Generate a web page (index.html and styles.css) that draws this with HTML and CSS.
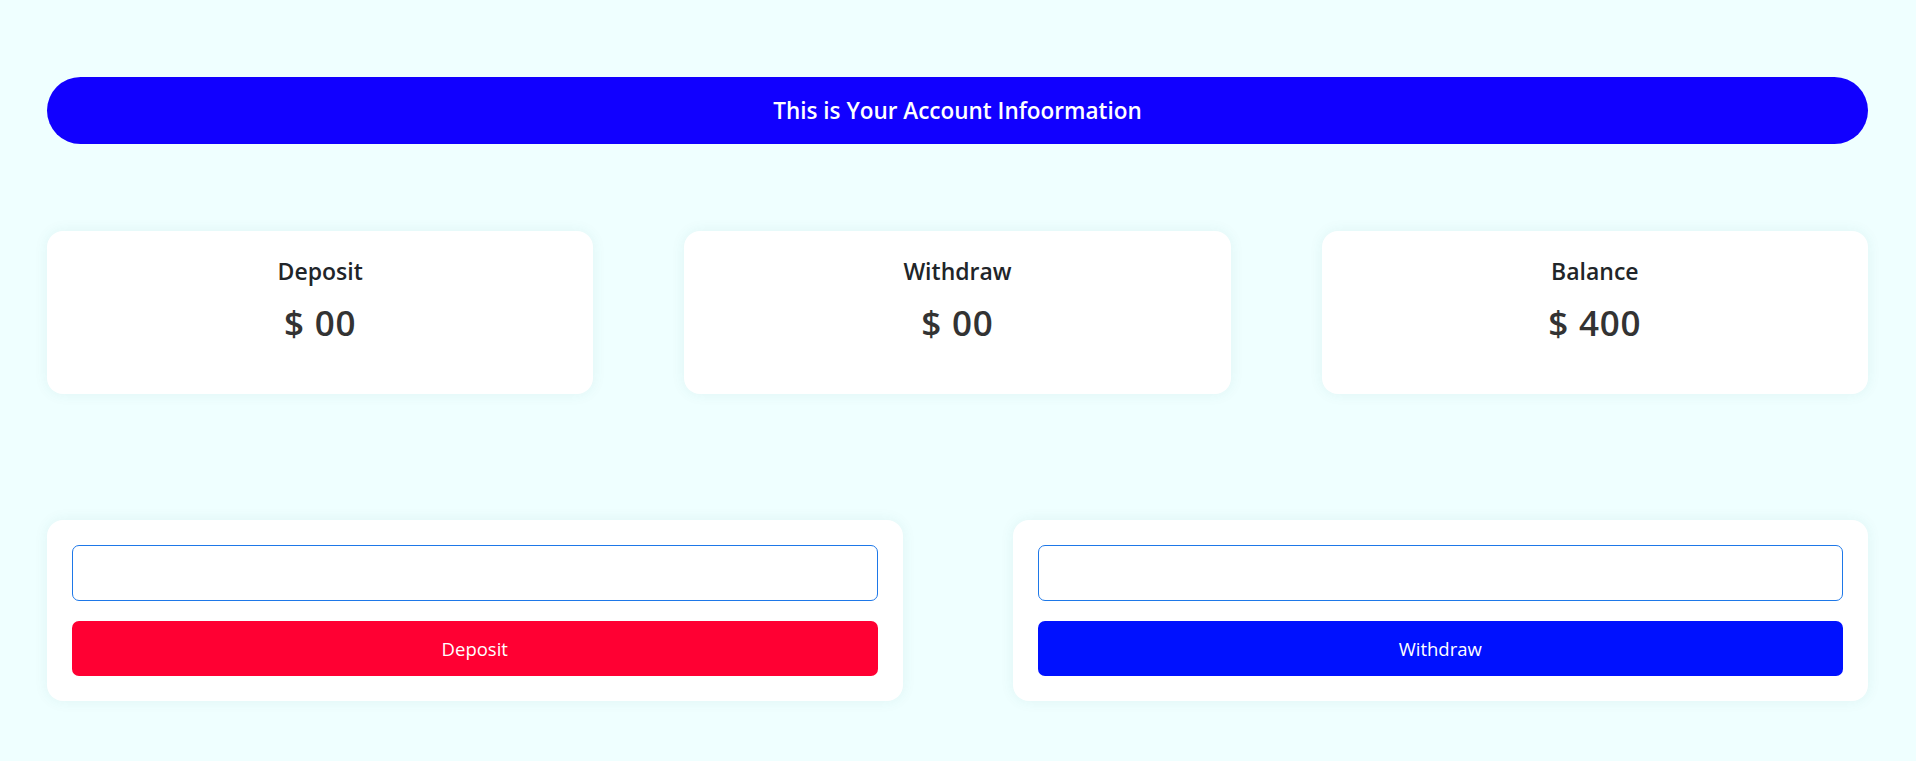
FILE: index.html
```html
<!DOCTYPE html>
<html lang="en">
<head>
<meta charset="utf-8">
<title>Account Information</title>
<link rel="stylesheet" href="styles.css">
</head>
<body>
<main class="page">
  <header class="banner">This is Your Account Infoormation</header>

  <section class="stats">
    <div class="stat-card">
      <h3 class="stat-title">Deposit</h3>
      <p class="stat-value">$ 00</p>
    </div>
    <div class="stat-card">
      <h3 class="stat-title">Withdraw</h3>
      <p class="stat-value">$ 00</p>
    </div>
    <div class="stat-card">
      <h3 class="stat-title">Balance</h3>
      <p class="stat-value">$ 400</p>
    </div>
  </section>

  <section class="actions">
    <div class="action-card">
      <input class="amount-input" type="text" aria-label="Deposit amount">
      <button class="btn btn-deposit" type="button">Deposit</button>
    </div>
    <div class="action-card">
      <input class="amount-input" type="text" aria-label="Withdraw amount">
      <button class="btn btn-withdraw" type="button">Withdraw</button>
    </div>
  </section>
</main>
</body>
</html>
```

FILE: styles.css
```css
* {
  box-sizing: border-box;
}

html, body {
  margin: 0;
  padding: 0;
}

body {
  background: #efffff;
  font-family: "Open Sans", "Noto Sans", "Liberation Sans", sans-serif;
  color: #212529;
  min-height: 761px;
}

.page {
  padding: 77px 48px 0 47px;
}

.banner {
  height: 67px;
  border-radius: 34px;
  background: #1100ff;
  color: #ffffff;
  font-size: 22.5px;
  font-weight: 600;
  display: flex;
  align-items: center;
  justify-content: center;
}

.stats {
  margin-top: 87px;
  display: grid;
  grid-template-columns: repeat(3, 1fr);
  column-gap: 91px;
}

.stat-card {
  height: 163px;
  background: #ffffff;
  border-radius: 16px;
  box-shadow: 0 0 14px rgba(40, 110, 110, 0.08);
  padding-top: 23px;
  text-align: center;
}

.stat-title {
  margin: 0;
  font-size: 23px;
  line-height: 34px;
  font-weight: 600;
  color: #212529;
}

.stat-value {
  margin: 10px 0 0 0;
  font-size: 35px;
  line-height: 50px;
  font-weight: 600;
  letter-spacing: 0.8px;
  color: #333333;
}

.actions {
  margin-top: 126px;
  display: grid;
  grid-template-columns: 1fr 1fr;
  column-gap: 110px;
}

.action-card {
  height: 181px;
  background: #ffffff;
  border-radius: 16px;
  box-shadow: 0 0 14px rgba(40, 110, 110, 0.08);
  padding: 25px;
  display: flex;
  flex-direction: column;
  gap: 20px;
}

.amount-input {
  height: 56px;
  width: 100%;
  border: 1px solid #1e78e8;
  border-radius: 7px;
  background: #ffffff;
  font-family: inherit;
  font-size: 18px;
  padding: 0 12px;
  outline: none;
}

.btn {
  height: 55px;
  width: 100%;
  border: none;
  border-radius: 7px;
  color: #ffffff;
  font-family: inherit;
  font-size: 18.5px;
  font-weight: 400;
  cursor: pointer;
}

.btn-deposit {
  background: #ff0033;
}

.btn-withdraw {
  background: #0011ff;
}
```
